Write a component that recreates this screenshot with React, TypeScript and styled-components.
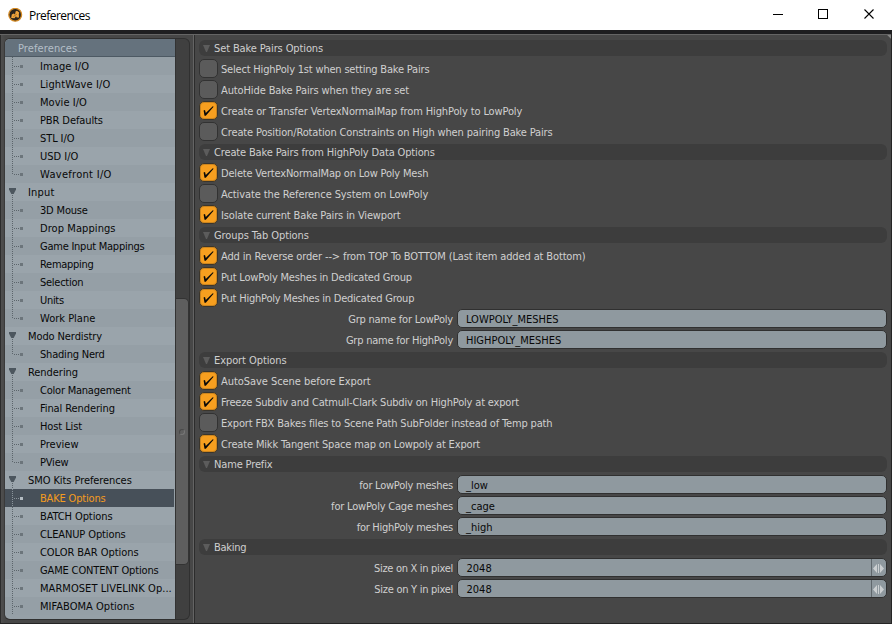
import React from "react";
import styled, { createGlobalStyle } from "styled-components";

const Global = createGlobalStyle`
  * { box-sizing: border-box; }
  body { margin: 0; background: #474747; overflow: hidden; }
  svg { display: block; flex: none; }
`;

const Window = styled.div`
  width: 892px;
  height: 624px;
  display: flex;
  flex-direction: column;
  font-family: "DejaVu Sans Condensed", "DejaVu Sans", sans-serif;
  font-stretch: condensed;
  font-size: 11px;
  color: #d0d0d0;
  white-space: nowrap;
`;

const TitleBar = styled.header`
  height: 30px;
  flex: none;
  display: flex;
  align-items: center;
  background: #fff;
  color: #000;
  padding-left: 8px;
`;

const Title = styled.span`
  font: 12px "Open Sans", sans-serif;
  letter-spacing: -0.55px;
  margin-left: 6px;
  flex: 1;
`;

const Body = styled.div`
  flex: 1;
  display: flex;
  min-height: 0;
  border-top: 4px solid #1e1e20;
  border-bottom: 1px solid #252525;
  border-right: 1px solid #252525;
  background: #474747;
  box-shadow: inset 0 1px 0 #656565;
`;

const Sidebar = styled.aside`
  width: 194px;
  flex: none;
  margin-top: 1px;
  padding: 3px 3px 4px 3px;
  border-left: 1px solid #2c2c2c;
  border-right: 1px solid #646464;
  background: linear-gradient(90deg, #4f4f4f, #474747 4px);
`;

const TreeFrame = styled.div`
  height: 582px;
  display: flex;
  border: 1px solid #303030;
  border-left-color: #3a3a3a;
  border-radius: 6px;
  overflow: hidden;
  background: #404040;
`;

const Tree = styled.div`
  width: 170px;
  flex: none;
  background: #96a0a7;
`;

const TreeHeader = styled.div`
  height: 18px;
  line-height: 19px;
  padding-left: 13px;
  background: #65727d;
  border-bottom: 1px solid #4d5963;
  color: #b4bfc8;
`;

const TreeRow = styled.div<{ $selected?: boolean; $shade: boolean }>`
  height: 18px;
  width: ${(p) => (p.$selected ? 169 : 170)}px;
  display: flex;
  align-items: center;
  background: ${(p) => (p.$selected ? "#475059" : p.$shade ? "#959fa6" : "#9aa4ab")};
  color: ${(p) => (p.$selected ? "#f49c20" : "#080808")};
`;

const Spaced = styled.span<{ $track?: number }>`
  letter-spacing: ${(p) => p.$track ?? 0}px;
`;

const Trough = styled.div`
  flex: 1;
  border-left: 1px solid #333;
  padding-top: 259px;
`;

const Thumb = styled.div`
  height: 267px;
  border: 1px solid #333;
  border-left: 0;
  border-radius: 0 5px 5px 0;
  background: #5e5e5e;
  display: flex;
  align-items: center;
  justify-content: center;
`;

const Grip = styled.i`
  width: 6px;
  height: 6px;
  margin-right: 1px;
  border-radius: 50%;
  border: 1px solid #4a4a4a;
  border-bottom-color: #777;
  border-right-color: #777;
  background: #606060;
`;

const Panel = styled.main`
  flex: 1;
  margin-top: 1px;
  padding: 3px 4px 0 4px;
  border-left: 1px solid #2c2c2c;
  background: linear-gradient(225deg, #858585 2.5px, transparent 3px);
`;

const SectionHead = styled.h2`
  margin: 2px 0;
  height: 16px;
  display: flex;
  align-items: center;
  gap: 4px;
  padding-left: 4px;
  font: inherit;
  color: #cfcfcf;
  background: #3d3d3d;
  border-radius: 6px;
`;

const Row = styled.label`
  height: 21px;
  line-height: 15px;
  display: flex;
  align-items: center;

  ${Spaced} {
    padding-top: 1px;
  }
`;

const Box = styled.span<{ $on: boolean }>`
  width: 19px;
  height: 19px;
  margin-right: 3px;
  flex: none;
  border: 1px solid ${(p) => (p.$on ? "#3a352c" : "#323232")};
  border-radius: 5px;
  background: ${(p) => (p.$on ? "#f79f1f" : "#5b5b5b")};
  box-shadow: ${(p) => (p.$on ? "inset 0 0 0 1px #cc851e" : "none")};
`;

const FieldName = styled.span`
  width: 254px;
  margin-right: 4px;
  flex: none;
  display: flex;
  justify-content: flex-end;
`;

const Field = styled.span<{ $inset: number }>`
  flex: 1;
  height: 19px;
  display: flex;
  align-items: center;
  justify-content: space-between;
  padding-left: ${(p) => p.$inset}px;
  border: 1px solid #303030;
  border-radius: 5px;
  overflow: hidden;
  background: #8f999f;
  color: #080808;
`;

const Stepper = styled.span`
  width: 15px;
  height: 17px;
  border-left: 1px solid #5f676c;
`;

const Logo = () => (
  <svg width="15" height="15" viewBox="0 0 15 15">
    <circle cx="7.2" cy="6.8" r="6.4" fill="#2a241d" stroke="#d48a24" strokeWidth="1.3" />
    <path d="M3.2 10L3.8 6.5L5.8 5.5L7 6.5L7.6 3.6L9 2.8L11.2 4.5L10.8 6.3L11 9.6H8.8L8 8.2L6.5 10.2Z" fill="#f0a43c" />
    <path d="M5.4 8.6L6.8 7.6L8.8 6.2" stroke="#8a5c1e" strokeWidth="0.7" fill="none" />
  </svg>
);

const Controls = () => (
  <svg width="142" height="30" shapeRendering="crispEdges">
    <path d="M23 14.5H33M68.5 9.5H77.5V18.5H68.5Z" stroke="#000" fill="none" />
    <path d="M114.5 9.5L123.5 18.5M123.5 9.5L114.5 18.5" stroke="#000" strokeWidth="1.1" fill="none" shapeRendering="auto" />
  </svg>
);

const ItemBranch = ({ selected, end }: { selected: boolean; end: boolean }) => (
  <svg width="35" height="18" shapeRendering="crispEdges">
    <path d={`M7.5 0V${end ? 10 : 18}`} stroke={selected ? "#8a949b" : "#5c656b"} strokeDasharray="1 1" />
    <path d="M9 9.5H15" stroke={selected ? "#8a949b" : "#5c656b"} strokeDasharray="1 1" />
    <rect x="15" y="8" width="3" height="3" fill={selected ? "#b4bcc2" : "#6c757b"} />
  </svg>
);

const GroupBranch = () => (
  <svg width="23" height="18">
    <path d="M4 5H11V6.5L8.7 11H6.3L4 6.5Z" fill="#4c565e" />
    <path d="M7.5 12V18" stroke="#5c656b" strokeDasharray="1 1" shapeRendering="crispEdges" />
  </svg>
);

const Caret = () => (
  <svg width="7" height="7">
    <path d="M0 0H7L4 7H3Z" fill="#5c5c5c" />
  </svg>
);

const Check = () => (
  <svg width="17" height="17" viewBox="0 0 17 17">
    <path d="M3.6 8.6L5 8L5.8 11L12.8 4.2L13.6 4.8L5.8 13.8H4.5Z" fill="#080808" />
  </svg>
);

const Arrows = () => (
  <svg width="14" height="17">
    <path d="M1 9.5L5 5V14ZM12 9.5L8 5V14Z" fill="#cbcfd1" />
    <path d="M6.5 5V14" stroke="#cbcfd1" />
  </svg>
);

type Leaf = [text: string, track?: number];
type TreeGroup = { name?: Leaf; items: Leaf[] };

const tree: TreeGroup[] = [
  {
    items: [
      ["Image I/O", 0.1],
      ["LightWave I/O", 0.1],
      ["Movie I/O", 0.05],
      ["PBR Defaults", -0.1],
      ["STL I/O", -0.1],
      ["USD I/O"],
      ["Wavefront I/O", 0.3],
    ],
  },
  {
    name: ["Input", 0.2],
    items: [
      ["3D Mouse", -0.18],
      ["Drop Mappings", 0.08],
      ["Game Input Mappings", -0.24],
      ["Remapping", -0.28],
      ["Selection", -0.27],
      ["Units", -0.3],
      ["Work Plane", 0],
    ],
  },
  { name: ["Modo Nerdistry", -0.1], items: [["Shading Nerd", -0.2]] },
  {
    name: ["Rendering", -0.05],
    items: [
      ["Color Management", -0.22],
      ["Final Rendering", -0.1],
      ["Host List", -0.1],
      ["Preview"],
      ["PView", -0.2],
    ],
  },
  {
    name: ["SMO Kits Preferences", -0.08],
    items: [
      ["BAKE Options", -0.18],
      ["BATCH Options", -0.1],
      ["CLEANUP Options", -0.12],
      ["COLOR BAR Options", -0.05],
      ["GAME CONTENT Options", -0.15],
      ["MARMOSET LIVELINK Op...", 0.05],
      ["MIFABOMA Options", 0.03],
    ],
  },
];

type Option =
  | { kind: "check"; text: string; on: boolean; track: number }
  | { kind: "field"; text: string; value: string; track: number; stepper: boolean };

const check = (text: string, on: boolean, track: number): Option => ({ kind: "check", text, on, track });
const field = (text: string, value: string, track: number, stepper = false): Option => ({
  kind: "field",
  text,
  value,
  track,
  stepper,
});

const sections: { title: string; track: number; options: Option[] }[] = [
  {
    title: "Set Bake Pairs Options",
    track: -0.12,
    options: [
      check("Select HighPoly 1st when setting Bake Pairs", false, -0.19),
      check("AutoHide Bake Pairs when they are set", false, -0.11),
      check("Create or Transfer VertexNormalMap from HighPoly to LowPoly", true, -0.125),
      check("Create Position/Rotation Constraints on High when pairing Bake Pairs", false, -0.15),
    ],
  },
  {
    title: "Create Bake Pairs from HighPoly Data Options",
    track: -0.15,
    options: [
      check("Delete VertexNormalMap on Low Poly Mesh", true, -0.19),
      check("Activate the Reference System on LowPoly", false, -0.1),
      check("Isolate current Bake Pairs in Viewport", true, -0.14),
    ],
  },
  {
    title: "Groups Tab Options",
    track: -0.08,
    options: [
      check("Add in Reverse order --> from TOP To BOTTOM (Last item added at Bottom)", true, -0.135),
      check("Put LowPoly Meshes in Dedicated Group", true, -0.2),
      check("Put HighPoly Meshes in Dedicated Group", true, -0.22),
      field("Grp name for LowPoly", "LOWPOLY_MESHES", -0.2),
      field("Grp name for HighPoly", "HIGHPOLY_MESHES", -0.24),
    ],
  },
  {
    title: "Export Options",
    track: -0.08,
    options: [
      check("AutoSave Scene before Export", true, -0.05),
      check("Freeze Subdiv and Catmull-Clark Subdiv on HighPoly at export", true, -0.17),
      check("Export FBX Bakes files to Scene Path SubFolder instead of Temp path", false, -0.155),
      check("Create Mikk Tangent Space map on Lowpoly at Export", true, -0.16),
    ],
  },
  {
    title: "Name Prefix",
    track: -0.15,
    options: [
      field("for LowPoly meshes", "_low", -0.24),
      field("for LowPoly Cage meshes", "_cage", -0.2),
      field("for HighPoly meshes", "_high", -0.26),
    ],
  },
  {
    title: "Baking",
    track: -0.25,
    options: [
      field("Size on X in pixel", "2048", -0.3, true),
      field("Size on Y in pixel", "2048", -0.28, true),
    ],
  },
];

const treeRows = tree.flatMap((g, gi) => [
  ...(g.name ? [{ leaf: g.name, group: true, end: false }] : []),
  ...g.items.map((leaf, i) => ({
    leaf,
    group: false,
    end: i === g.items.length - 1 && gi < tree.length - 1,
  })),
]);

export default function App() {
  return (
    <>
      <Global />
      <Window>
        <TitleBar>
          <Logo />
          <Title>Preferences</Title>
          <Controls />
        </TitleBar>
        <Body>
          <Sidebar>
            <TreeFrame>
              <Tree>
                <TreeHeader>
                  <Spaced $track={0.1}>Preferences</Spaced>
                </TreeHeader>
                {treeRows.map(({ leaf: [text, track], group, end }, i) => {
                  const selected = text === "BAKE Options";
                  return (
                    <TreeRow key={text} $selected={selected} $shade={i % 2 === 0}>
                      {group ? <GroupBranch /> : <ItemBranch selected={selected} end={end} />}
                      <Spaced $track={track}>{text}</Spaced>
                    </TreeRow>
                  );
                })}
              </Tree>
              <Trough>
                <Thumb>
                  <Grip />
                </Thumb>
              </Trough>
            </TreeFrame>
          </Sidebar>
          <Panel>
            {sections.map((s) => (
              <section key={s.title}>
                <SectionHead>
                  <Caret />
                  <Spaced $track={s.track}>{s.title}</Spaced>
                </SectionHead>
                {s.options.map((o) =>
                  o.kind === "check" ? (
                    <Row key={o.text}>
                      <Box $on={o.on}>{o.on && <Check />}</Box>
                      <Spaced $track={o.track}>{o.text}</Spaced>
                    </Row>
                  ) : (
                    <Row key={o.text}>
                      <FieldName>
                        <Spaced $track={o.track}>{o.text}</Spaced>
                      </FieldName>
                      <Field $inset={o.stepper ? 8.5 : 8}>
                        <Spaced>{o.value}</Spaced>
                        {o.stepper && (
                          <Stepper>
                            <Arrows />
                          </Stepper>
                        )}
                      </Field>
                    </Row>
                  ),
                )}
              </section>
            ))}
          </Panel>
        </Body>
      </Window>
    </>
  );
}
